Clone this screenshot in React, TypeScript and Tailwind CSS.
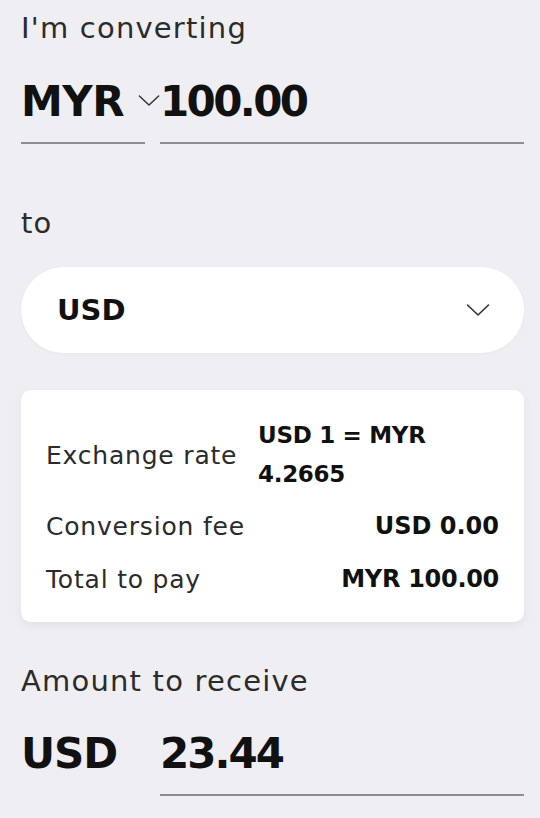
import React from "react";

function Chevron({ className }: { className?: string }) {
  return (
    <svg viewBox="0 0 24 12" className={className} fill="none" stroke="currentColor" strokeWidth={1.6} strokeLinecap="round" strokeLinejoin="round">
      <path d="M1.5 1 L12 11 L22.5 1" />
    </svg>
  );
}

export default function App() {
  return (
    <div className="min-h-[818px] w-[540px] bg-[#efeef3] pl-[21px] pr-[16px] pt-[10px] text-[#111] font-['DejaVu_Sans',sans-serif]">
      <p className="text-[29px] leading-[36px] tracking-[1.2px] text-[#2b2b2b]">I'm converting</p>

      <div className="mt-[35px] flex gap-[15px]">
        <div className="relative w-[124px] shrink-0 border-b-2 border-[#8d8d92] pb-[19px]">
          <span className="block text-[42px] font-bold leading-[42px] tracking-[-0.5px]">MYR</span>
          <Chevron className="absolute left-[117px] top-[14px] h-[11px] w-[22px] text-[#333]" />
        </div>
        <div className="flex-1 border-b-2 border-[#8d8d92] pb-[19px]">
          <span className="block text-[42px] font-bold leading-[42px] tracking-[-2.6px]">100.00</span>
        </div>
      </div>

      <p className="mt-[61px] text-[29px] leading-[36px] tracking-[1.2px] text-[#2b2b2b]">to</p>

      <div className="mt-[26px] flex h-[86px] items-center justify-between rounded-full bg-white pl-[36px] pr-[34px] shadow-[0_1px_4px_rgba(0,0,0,0.03)]">
        <span className="text-[29px] font-bold leading-none">USD</span>
        <Chevron className="h-[12px] w-[24px] text-[#333]" />
      </div>

      <div className="mt-[37px] rounded-[10px] bg-white px-[25px] pt-[26px] pb-[23px] shadow-[0_3px_10px_rgba(0,0,0,0.06)]">
        <div className="flex items-center">
          <span className="w-[212px] shrink-0 text-[25px] leading-[39px] tracking-[0.8px] text-[#2b2b2b]">Exchange rate</span>
          <span className="text-[23px] font-bold leading-[39px] tracking-[-0.3px]">USD 1 = MYR<br />4.2665</span>
        </div>
        <div className="mt-[13px] flex items-center justify-between">
          <span className="text-[25px] leading-[39px] tracking-[0.8px] text-[#2b2b2b]">Conversion fee</span>
          <span className="text-[24px] font-bold leading-[39px]">USD 0.00</span>
        </div>
        <div className="mt-[14px] flex items-center justify-between">
          <span className="text-[25px] leading-[39px] tracking-[0.8px] text-[#2b2b2b]">Total to pay</span>
          <span className="text-[24px] font-bold leading-[39px] tracking-[-0.3px]">MYR 100.00</span>
        </div>
      </div>

      <p className="mt-[41px] text-[29px] leading-[36px] tracking-[1.2px] text-[#2b2b2b]">Amount to receive</p>

      <div className="mt-[34px] flex gap-[15px]">
        <div className="w-[124px] shrink-0 pb-[19px]">
          <span className="block text-[42px] font-bold leading-[42px] tracking-[-1px]">USD</span>
        </div>
        <div className="flex-1 border-b-2 border-[#8d8d92] pb-[19px]">
          <span className="block text-[42px] font-bold leading-[42px] tracking-[-2px]">23.44</span>
        </div>
      </div>
    </div>
  );
}
